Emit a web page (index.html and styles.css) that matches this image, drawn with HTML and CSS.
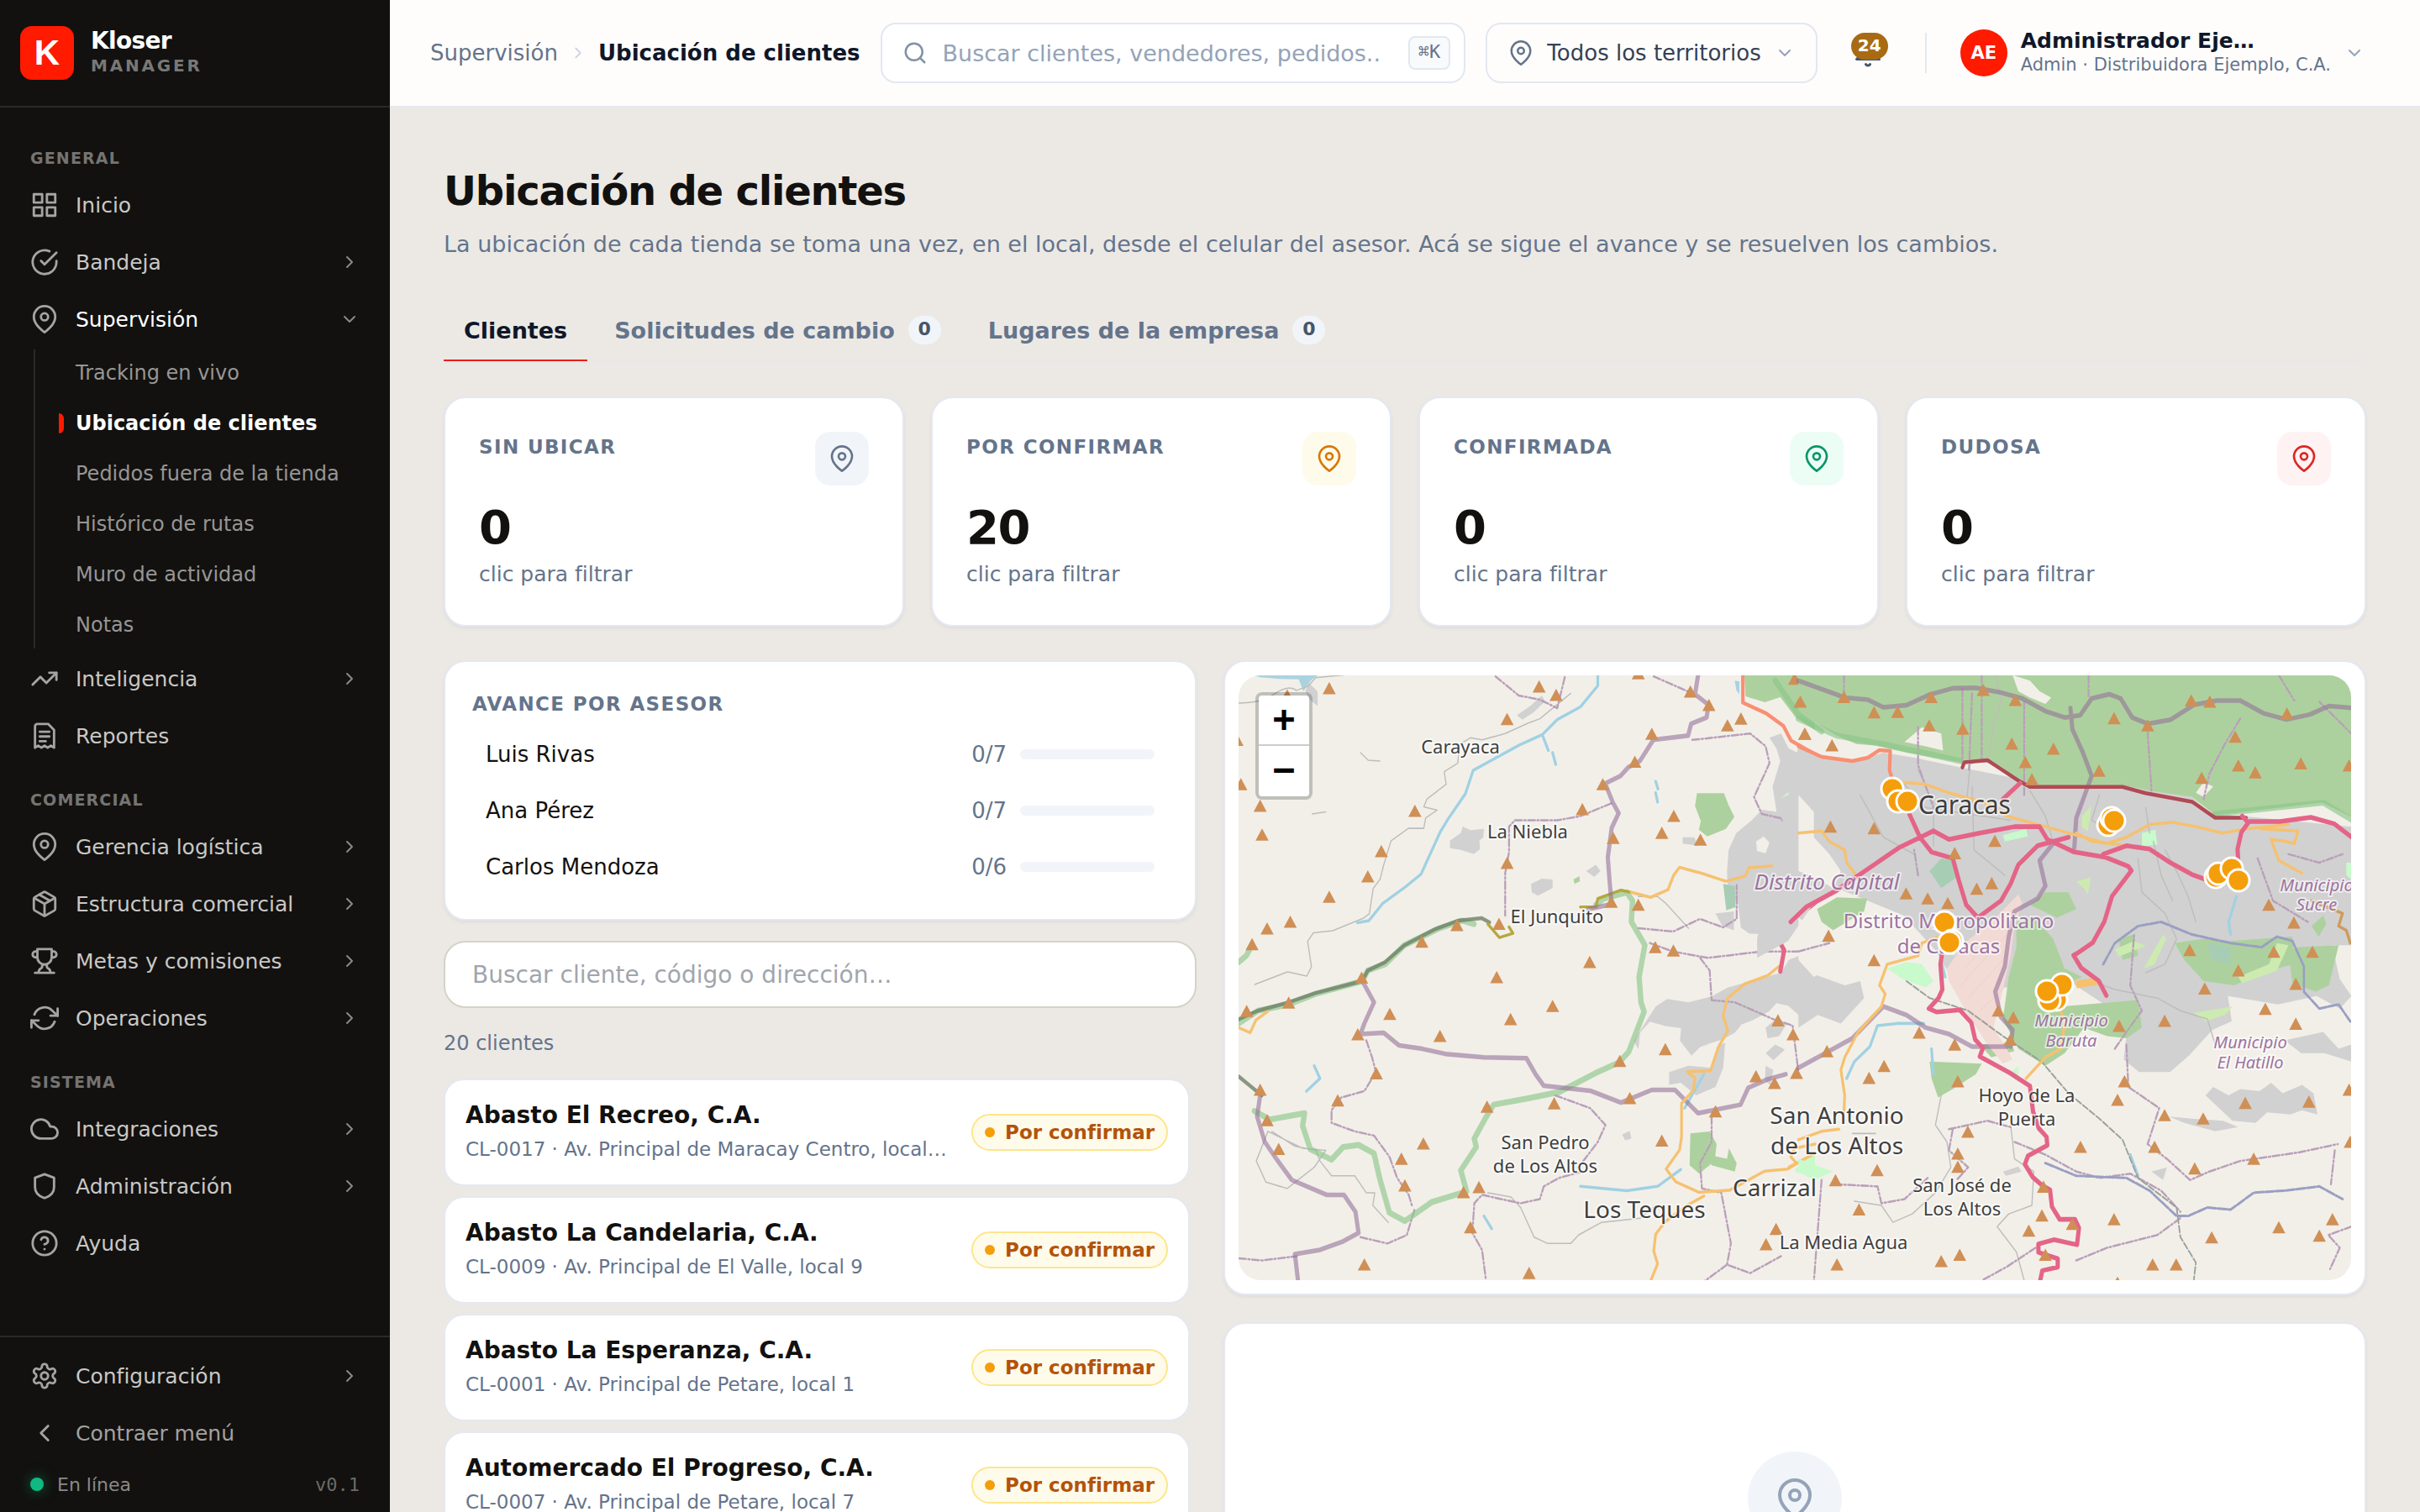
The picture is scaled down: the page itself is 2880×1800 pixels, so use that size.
FILE: index.html
```html
<!DOCTYPE html>
<html lang="es">
<head>
<meta charset="utf-8">
<meta name="viewport" content="width=device-width, initial-scale=1">
<title>Ubicación de clientes · Kloser Manager</title>
<link rel="stylesheet" href="styles.css">
</head>
<body>
<svg class="sprite" aria-hidden="true">
  <symbol id="i-pin" viewBox="0 0 24 24"><path d="M21 10c0 7-9 13-9 13s-9-6-9-13a9 9 0 0 1 18 0z"/><circle cx="12" cy="10" r="3"/></symbol>
  <symbol id="i-right" viewBox="0 0 24 24"><path d="m9 18 6-6-6-6"/></symbol>
  <symbol id="i-down" viewBox="0 0 24 24"><path d="m6 9 6 6 6-6"/></symbol>
</svg>
<div class="app">
  <aside class="sidebar">
    <div class="brand">
      <span class="brand-mark">K</span>
      <div><div class="brand-name">Kloser</div><div class="brand-sub">MANAGER</div></div>
    </div>
    <nav class="nav" aria-label="Principal">
      <h2 class="nav-label">GENERAL</h2>
      <a class="nav-item" href="#inicio"><svg class="nav-icon" viewBox="0 0 24 24"><path d="M3 3h7v7H3zM14 3h7v7h-7zM14 14h7v7h-7zM3 14h7v7H3z"/></svg><span>Inicio</span></a>
      <button class="nav-item" type="button"><svg class="nav-icon" viewBox="0 0 24 24"><path d="M22 11.1V12a10 10 0 1 1-5.9-9.1"/><path d="M22 4 12 14l-3-3"/></svg><span>Bandeja</span><svg class="chev"><use href="#i-right"/></svg></button>
      <button class="nav-item open" type="button" aria-expanded="true"><svg class="nav-icon"><use href="#i-pin"/></svg><span>Supervisión</span><svg class="chev"><use href="#i-down"/></svg></button>
      <div class="subnav">
        <a class="sub-item" href="#tracking">Tracking en vivo</a>
        <a class="sub-item current" href="#ubicacion" aria-current="page">Ubicación de clientes</a>
        <a class="sub-item" href="#pedidos">Pedidos fuera de la tienda</a>
        <a class="sub-item" href="#rutas">Histórico de rutas</a>
        <a class="sub-item" href="#muro">Muro de actividad</a>
        <a class="sub-item" href="#notas">Notas</a>
      </div>
      <button class="nav-item" type="button"><svg class="nav-icon" viewBox="0 0 24 24"><path d="m22 7-8.5 8.5-5-5L2 17"/><path d="M16 7h6v6"/></svg><span>Inteligencia</span><svg class="chev"><use href="#i-right"/></svg></button>
      <a class="nav-item" href="#reportes"><svg class="nav-icon" viewBox="0 0 24 24"><path d="M4 22V4a2 2 0 0 1 2-2h9l5 5v15l-2.700-1.800L14.600 22 12 20.200 9.400 22l-2.700-1.800z"/><path d="M8 8.500h8M8 12.500h8M8 16.500h5"/></svg><span>Reportes</span></a>
      <h2 class="nav-label">COMERCIAL</h2>
      <button class="nav-item" type="button"><svg class="nav-icon"><use href="#i-pin"/></svg><span>Gerencia logística</span><svg class="chev"><use href="#i-right"/></svg></button>
      <button class="nav-item" type="button"><svg class="nav-icon" viewBox="0 0 24 24"><path d="m7.500 4.270 9 5.150"/><path d="M21 8a2 2 0 0 0-1-1.730l-7-4a2 2 0 0 0-2 0l-7 4A2 2 0 0 0 3 8v8a2 2 0 0 0 1 1.730l7 4a2 2 0 0 0 2 0l7-4A2 2 0 0 0 21 16Z"/><path d="m3.300 7 8.700 5 8.700-5M12 22V12"/></svg><span>Estructura comercial</span><svg class="chev"><use href="#i-right"/></svg></button>
      <button class="nav-item" type="button"><svg class="nav-icon" viewBox="0 0 24 24"><path d="M6 9H4.500a2.500 2.500 0 0 1 0-5H6M18 9h1.500a2.500 2.500 0 0 0 0-5H18M4 22h16M10 14.660V17c0 .550-.470.980-.970 1.210C7.850 18.750 7 20.240 7 22M14 14.660V17c0 .550.470.980.970 1.210C16.150 18.750 17 20.240 17 22M18 2H6v7a6 6 0 0 0 12 0V2Z"/></svg><span>Metas y comisiones</span><svg class="chev"><use href="#i-right"/></svg></button>
      <button class="nav-item" type="button"><svg class="nav-icon" viewBox="0 0 24 24"><path d="M23 4v6h-6M1 20v-6h6"/><path d="M3.510 9a9 9 0 0 1 14.850-3.360L23 10M1 14l4.640 4.360A9 9 0 0 0 20.490 15"/></svg><span>Operaciones</span><svg class="chev"><use href="#i-right"/></svg></button>
      <h2 class="nav-label">SISTEMA</h2>
      <button class="nav-item" type="button"><svg class="nav-icon" viewBox="0 0 24 24"><path d="M18 10h-1.260A8 8 0 1 0 9 20h9a5 5 0 0 0 0-10z"/></svg><span>Integraciones</span><svg class="chev"><use href="#i-right"/></svg></button>
      <button class="nav-item" type="button"><svg class="nav-icon" viewBox="0 0 24 24"><path d="M20 13c0 5-3.500 7.500-7.660 8.950a1 1 0 0 1-.670-.010C7.500 20.500 4 18 4 13V5l8-3 8 3z"/></svg><span>Administración</span><svg class="chev"><use href="#i-right"/></svg></button>
      <a class="nav-item" href="#ayuda"><svg class="nav-icon" viewBox="0 0 24 24"><circle cx="12" cy="12" r="10"/><path d="M9.090 9a3 3 0 0 1 5.830 1c0 2-3 3-3 3M12 17h.010"/></svg><span>Ayuda</span></a>
    </nav>
    <div class="side-foot">
      <button class="nav-item" type="button"><svg class="nav-icon" viewBox="0 0 24 24"><path d="M12.220 2h-.440a2 2 0 0 0-2 2v.180a2 2 0 0 1-1 1.730l-.430.250a2 2 0 0 1-2 0l-.150-.080a2 2 0 0 0-2.730.730l-.220.380a2 2 0 0 0 .730 2.730l.150.100a2 2 0 0 1 1 1.720v.510a2 2 0 0 1-1 1.740l-.150.090a2 2 0 0 0-.730 2.730l.220.380a2 2 0 0 0 2.730.730l.150-.080a2 2 0 0 1 2 0l.430.250a2 2 0 0 1 1 1.730V20a2 2 0 0 0 2 2h.440a2 2 0 0 0 2-2v-.180a2 2 0 0 1 1-1.730l.430-.250a2 2 0 0 1 2 0l.150.080a2 2 0 0 0 2.730-.730l.220-.390a2 2 0 0 0-.730-2.730l-.150-.080a2 2 0 0 1-1-1.740v-.500a2 2 0 0 1 1-1.740l.150-.090a2 2 0 0 0 .730-2.730l-.220-.380a2 2 0 0 0-2.730-.730l-.150.080a2 2 0 0 1-2 0l-.430-.250a2 2 0 0 1-1-1.730V4a2 2 0 0 0-2-2z"/><circle cx="12" cy="12" r="3"/></svg><span>Configuración</span><svg class="chev"><use href="#i-right"/></svg></button>
      <button class="nav-item muted" type="button"><svg class="nav-icon" viewBox="0 0 24 24"><path d="m15 18-6-6 6-6"/></svg><span>Contraer menú</span></button>
      <div class="status"><span class="status-dot"></span><span>En línea</span><span class="version">v0.1</span></div>
    </div>
  </aside>

  <div class="page">
    <header class="topbar">
      <nav class="crumbs" aria-label="Ruta"><a href="#supervision">Supervisión</a><svg class="crumb-sep"><use href="#i-right"/></svg><span class="crumb-now">Ubicación de clientes</span></nav>
      <div class="search">
        <svg class="search-icon" viewBox="0 0 24 24"><circle cx="11" cy="11" r="8"/><path d="m21 21-4.350-4.350"/></svg>
        <input type="search" aria-label="Buscar" placeholder="Buscar clientes, vendedores, pedidos..">
        <kbd>⌘K</kbd>
      </div>
      <button class="territory" type="button"><svg class="pin30"><use href="#i-pin"/></svg><span>Todos los territorios</span><svg class="chev"><use href="#i-down"/></svg></button>
      <button class="bell" type="button" aria-label="Notificaciones"><svg viewBox="0 0 24 24"><path d="M18 8A6 6 0 0 0 6 8c0 7-3 9-3 9h18s-3-2-3-9"/><path d="M13.730 21a2 2 0 0 1-3.460 0"/></svg><span class="bell-count">24</span></button>
      <span class="divider"></span>
      <button class="user" type="button"><span class="avatar">AE</span><span class="user-text"><strong>Administrador Eje…</strong><small>Admin · Distribuidora Ejemplo, C.A.</small></span><svg class="chev"><use href="#i-down"/></svg></button>
    </header>

    <main class="content">
      <h1>Ubicación de clientes</h1>
      <p class="lead">La ubicación de cada tienda se toma una vez, en el local, desde el celular del asesor. Acá se sigue el avance y se resuelven los cambios.</p>
      <div class="tabs" role="tablist">
        <button class="tab active" type="button" role="tab" aria-selected="true">Clientes</button>
        <button class="tab" type="button" role="tab">Solicitudes de cambio <span class="count">0</span></button>
        <button class="tab" type="button" role="tab">Lugares de la empresa <span class="count">0</span></button>
      </div>

      <section class="kpis" aria-label="Resumen">
        <button class="card kpi" type="button"><span class="kpi-head"><span class="eyebrow">SIN UBICAR</span><span class="kpi-icon slate"><svg><use href="#i-pin"/></svg></span></span><span class="kpi-num">0</span><span class="kpi-hint">clic para filtrar</span></button>
        <button class="card kpi" type="button"><span class="kpi-head"><span class="eyebrow">POR CONFIRMAR</span><span class="kpi-icon amber"><svg><use href="#i-pin"/></svg></span></span><span class="kpi-num">20</span><span class="kpi-hint">clic para filtrar</span></button>
        <button class="card kpi" type="button"><span class="kpi-head"><span class="eyebrow">CONFIRMADA</span><span class="kpi-icon green"><svg><use href="#i-pin"/></svg></span></span><span class="kpi-num">0</span><span class="kpi-hint">clic para filtrar</span></button>
        <button class="card kpi" type="button"><span class="kpi-head"><span class="eyebrow">DUDOSA</span><span class="kpi-icon red"><svg><use href="#i-pin"/></svg></span></span><span class="kpi-num">0</span><span class="kpi-hint">clic para filtrar</span></button>
      </section>

      <div class="split">
        <div class="left">
          <section class="card advance">
            <h2 class="eyebrow">AVANCE POR ASESOR</h2>
            <ul>
              <li><span>Luis Rivas</span><span class="ratio">0/7</span><span class="bar"></span></li>
              <li><span>Ana Pérez</span><span class="ratio">0/7</span><span class="bar"></span></li>
              <li><span>Carlos Mendoza</span><span class="ratio">0/6</span><span class="bar"></span></li>
            </ul>
          </section>
          <input class="client-search" type="search" aria-label="Buscar cliente" placeholder="Buscar cliente, código o dirección…">
          <p class="total">20 clientes</p>
          <div class="clients">
            <button class="client" type="button"><span class="client-text"><strong>Abasto El Recreo, C.A.</strong><small>CL-0017 · Av. Principal de Maracay Centro, local…</small></span><span class="badge">Por confirmar</span></button>
            <button class="client" type="button"><span class="client-text"><strong>Abasto La Candelaria, C.A.</strong><small>CL-0009 · Av. Principal de El Valle, local 9</small></span><span class="badge">Por confirmar</span></button>
            <button class="client" type="button"><span class="client-text"><strong>Abasto La Esperanza, C.A.</strong><small>CL-0001 · Av. Principal de Petare, local 1</small></span><span class="badge">Por confirmar</span></button>
            <button class="client" type="button"><span class="client-text"><strong>Automercado El Progreso, C.A.</strong><small>CL-0007 · Av. Principal de Petare, local 7</small></span><span class="badge">Por confirmar</span></button>
          </div>
        </div>

        <div class="right">
          <section class="card map-card">
            <div class="map">
              <svg class="map-svg" viewBox="0 0 1324 720" preserveAspectRatio="xMidYMid slice" role="img" aria-label="Mapa de clientes en Caracas">
                <defs>
                  <marker id="peak" markerUnits="userSpaceOnUse" markerWidth="36" markerHeight="30" refX="18" refY="15" orient="0"><path d="M18 0 35 29H1z" fill="#d08f55"/></marker>
                </defs>
                <g transform="matrix(0.4592 0 0 0.5038 -34 -34)">
                  <!-- western half -->
                  <g class="water-fill"><path d="M110 67h170l-18 12-20 26-12-28-50-1-50-4zM1360 80l12 2v30l-8-10z"/></g>
                  <g class="town">
                    <path d="M622 458l28-18 5-15 20 8 35-3-2 20-10 8 2 20-16 12-34-10-28-4zM832 560l28-12 28 2v20l-38 18-16-8zM795 162l35-22 30-25 8 14-28 25-30 18zM975 530l25-15 12 15-16 14zM255 85l24 20v35l-20-15-12-20z"/>
                    <path d="M1450 215l30-10 20 35 45 20 23 5v165l-40 5-20 20-25-10-13-45-12-70 20-60-10-30z"/>
                    <path d="M1340 530l4-50 20-40 40-30 26-25 40 5 20 20 20 30 58-10v170l-60 20-30 60-80-2-22-14-8-60-26-30z"/>
                    <path d="M1155 850l30-18 55 8 60-14 40-20 60-16 80-20 20-30 68-25v155l-40 2-30-24-30-6-20 20-40 20-30 10-18 20-32 16-28 8-30 10-22 20-30-35 3-30-41-5-40-10-25 25-5 40-12-20z"/>
                    <path d="M1190 1005l50-15 60 5 15-50 20-10-5 60-20 45-50 20-40-30-30 5zM1310 630l48-5v45l-30-10zM1440 900l20-15 35 5-20 30-30 5zM1440 960l25-20 25 12-30 25zM1440 990l20 10-8 35-14-10zM1225 450l30 0 10 20-40-5zM1068 1152l20-8 4 18-16 4z"/>
                  </g>
                  <path class="land" d="M1415 460l20-12 15 15-10 25-22-5z"/>
                  <g class="wood">
                    <path d="M1385 67h183v130l-50-30-40-48-40 12-50-14zM1262 346h70l12 28 15 28-22 28-48 18-22-16 5-20-15-36zM1245 1150l50-5 18 30-5 40-40 30-25-20zM1290 1200l50 10 5-25 20 35-5 20-60-15zM942 550l15-8 2 12-14 6z"/>
                    <path class="scrub" d="M1330 560l30 5 2 50-24 8z"/>
                  </g>
                  <path class="mint" d="M1480 360q35-40 58 0-30-22-58 0zM1515 1235l53-40v55l-48-8z"/>
                  <g class="lane">
                    <path d="M74 133q60 0 90-20 40-25 60-10l30-10 20-20 90-8M935 110l-80 60-30 10-60 25-60 15-30-5-28 15-5 45-35 20 5 30-50 35-8 18 35 8-30 18-5 25-40 0-45 30-20 60-8 30-18 22-10 60-15 10-80 30-50 5-15 20 10 60-12 22-50-10-85 30"/>
                    <path d="M160 1145l60 35 55 10 10 25 30 35 60 0 30 40 22 0-5 30 40 40M120 1215l25 50 55 15 70-50 30-40-60-5-90-40zM720 1290l60 10 25 25 35 70 35 15 60 0 20-20 60-30 100-10 40-30M1110 590l50 0 20 15 60 60M390 250l20 18 30 2 M265 395l35-5"/>
                  </g>
                  <g class="river">
                    <path d="M1005 67v25l-45 50-60 30-38 35-60 25-60 30-60 30-20 55-45 60-20 30-30 60-20 40-40 30-60 40-35 40-30 5M862 210l15 35M888 250l8 28M1155 318l6 18M1155 345l5 22M250 1050l35-30-15-30M960 1275l120 10 80-10 60-40M1280 1010l-50 80M710 1345l20 30"/>
                  </g>
                  <g class="dash">
                    <path d="M740 70l60 45 55 10 45 20 20-75M1040 370l-80 30-60 10-110 0-15 15 0 60-10 50 0 100M405 930l15 40 10 35-30 45-60 15-25 30 0 30 60 20 50 10 40 50 20 50 30 40 10 30M1110 665l90 8 70-30 60 20 35-20 0-80M1140 700l60 20 90 15 140-15 138 0M1270 735l25 30 5 70 60 5 100 40 50 15 15 110M895 1060l90 30 40 40-20 40-50 60M965 1240l-60 15-40 20-10 30-50 10-100-20-20 20-5 70 25 40 10 70M1300 1110l0 60-30 50 5 60 50 10 25 120-10 50 60 20 80-40M1340 1460l-60 40M75 1445l60 5 90-10M1250 220l150-15 40 30 10 40-40 80 20 40 50 10 30 50 88-5M390 1395l70 15 50-20 20-60M1150 70l100 40"/>
                  </g>
                  <g class="greenline">
                    <path d="M74 745l20-15 15-25M74 890l50-30 80-15 70-25 120-30 15-25 45-15 50-45 90-40 60-18 30 8M1000 610l20-15 60-15 15 20-3 50 35 55-15 75 5 60 8 22-40 95-25 25-60 25-95 45-80 15-90 15-20 30-30 50 5 20-40 55 15 50-90 25-70 45-40-20-25-80-15-60-40-20-40 5-30 30-55-25-20-55 5-30-90 15-40-20"/>
                  </g>
                  <path class="darkline" d="M74 880l50-20 80-20 70-22 120-28 15-25 45-20 50-40 80-38 60-20 60-6 20 10M74 1015l60 45"/>
                  <path class="olive" d="M720 655l30 32 35-10-10-15M960 615l40 0 5-20 60-20 25 5"/>
                  <g class="bound">
                    <path d="M1265 67l-8 45 35 25-5 30-40 15-8 28-90 10-35 50-30 15-20 20-40 18 20 45 15 25-18 35-10 70 5 60 5 50-60 12M395 790l30 50-25 50-10 25 60-3 40 30 60 8 60 12 100 8 110 2 25 40 20 25 120 12 80 28 80-30 60 0 60 55 110-20 20-40 50-20 47-12M130 1060l-8 50 20 60 30 40 40 50 90 35 45 0 30 40 8 50-40 20-60 20-65 10 8 62"/>
                  </g>
                  <g class="road2">
                    <path d="M1092 580l50 12 45-18 15-35 15-18 60 15 60 18 50-12 10-20 70-5 50-40 15-40 36-5M74 900l30 12 15-30 30-20M1475 755l-30 22-60 20-45 35-10 40 12 35-25 40-20 55-60 2 20 15-5 30-30 30 0 80-5 30-35 45 25 30 60 25 80-5 90-45 60-5 40-22 30-15M1280 1298l-40 20-60 40-25 30-5 40 10 30-20 45M1500 1230l20-10-15-15 10-20 53-10"/>
                  </g>
                  <path class="trunk" d="M1381 67v65l60 25 45 30 20 35 62 32"/>
                  <path class="motor" d="M1568 605l-50 35-52 32 10 25 12 20-10 50"/>
                  <path class="peaks" d="M200 115L309 98 853 94 897 114 770 171 1245 106 1293 138 1376 170 1341 186 1145 206 1101 272 1018 325 965 384 1045 452 531 388 444 483 409 543 309 591 208 650 148 666 109 703 130 376 135 444 80 325 770 511 749 655 640 658 549 697 393 782 204 841 95 861 743 781 984 745 888 849 779 880 466 868 596 920 383 916 431 1008 331 1072 130 1047 148 1119 178 1187 553 1174 496 1210 505 1273 657 1289 697 1277 718 1087 892 1079 1062 979 1180 951 1088 1067 1310 1098 1171 1167 675 1372 400 1460 827 1480 1441 1412 1467 1376 1463 1031 1520 1007 1415 1015 1472 883 1511 916 1154 710 1201 718 1110 610 1040 603 1202 400 1171 440 1271 456 1515 76 1529 130 1541 206 1110 63 70 220"/>

                  <!-- eastern half -->
                  <g transform="translate(1525 0)">
                    <g class="town">
                      <path d="M0 235l60 27 90 8 70-20 80 12 120 23 140 25 40 15h260l160 30 50 40 80 5 283 25v280l-50 0 20 80 30 40-30 30-60-30-100 20-130-20 10 60-50 20-60 60-50 40-80 0-40-30 10-80-60-50-100-60-80 20-200 0-60-90-80-80-160-60-80 40-60 80-80 40V690z"/>
                      <path d="M1055 1060l20-20 40 20 30-15 50 5 30-20 30 25 50-20 30 20 10 50-40-10-30 10-60-5-30 25-60-5zM1260 930l100-20 40 40 33-10v40l-70-20-60 0zM960 1110l60 5 80 5 40 15-60 10-80-20zM530 1240l40-12 8 12-40 10zM915 1240l40-10-10 30zM0 760l60 20 60 20 40-10 10 40-60 60-60-20-50 30z"/>
                    </g>
                    <g class="land">
                      <path d="M0 350l40 40 0 60 40 40 30 40-20 40-60-30-30-10zM0 640l50 30 80 30 50-30 40 50-40 40-80-10-60 30-40-40zM130 900l80-30 110 30 60 60 90 20 110 90V1100H130z"/>
                    </g>
                    <g class="wood">
                      <path d="M0 67h1433v335l-75-34-278 30-60-43-110-15-50-10H600l-40-25-60-32-70 2-150-25-80-17-50-3-50-20-100-55z"/>
                      <path d="M48 620l52-28 78 3-8 30-80 45-30-20zM565 650l45-10 50 50 30 70 45 20-45 20-10 50 200-15 10 65-40 25-50-5-60-20-50 60-50 30-70-40-40-70 15-100 20-70zM340 980l135 5-15 25-60 35-38 20-17-45zM830 690l40-10 10 50-40 10zM975 700l75-10 70 5 160-10 5 65-45 10-60 20-50 20-80-10-50-50zM1290 710l110-5-25 95-35 15-60-20-10-75zM600 610l40-30 60 0 20 40-50 20zM470 940l80-5 10 20-60 15zM1330 660l30-25 8 20-20 30z"/>
                      <path class="scrub" d="M340 530l30-30 35 5 5 40-40 25zM1060 700l60 10 0 40-50-10z"/>
                    </g>
                    <g class="land">
                      <path d="M555 67l45 13 25 25 30 15-15 15-40-15-30-15zM275 225l45-35 50 15 5 40-45-10zM1030 345l20-25 25 10-25 25z"/>
                    </g>
                    <g class="mint"><path d="M230 760l50-15 40 5 30 40-20 15-60-20zM530 445l60-15 5 18-60 12zM890 440l35-8 5 35-40 5zM545 1010l25-20 0 40zM1420 510l13 0v40l-13-10zM0 1210l60 20 30 10-50 20-40-20z"/></g>
                    <g class="lime"><path d="M895 760l50-80 8 10-30 60zM1025 865l100-15-20 20-50 15zM735 400l25-25-10 60-15-8zM720 555l38-10-8 40-10-15zM1140 780l80-30 20-50 30 5-30 60-90 30zM820 715l50-20 30 12-70 25z"/></g>
                    <path class="airport" d="M570 585l10 20-20 55-10 70-30 120-15 50 35 50 15 25-25 10-40-45-50-70-50-80-5-30 45-60 70-50z"/>
                    <path class="hatch" d="M420 800l120-120M440 830l100-100M470 860l70-60M430 760l60-60"/>
                    <g class="lane">
                      <path d="M510 67l15 60-20 60-10 70-50 20-10 100M310 290l40 80 0 100M600 340l40 60 20 60M780 350l-20 60 60 30M920 460l20 80 30 60M950 480l30 50 30 60 20 60M760 790l60 20 110 20 60 30 70 20 20 60M450 330l5 150 80 60M880 500l10 80 60 50 30 60-30 60-50 20M270 320l60 60 220 30M160 350l60 100 80 40M140 1150l60 0M370 1060l-15 70 30 40 10 60-40 60-60 50-50 20-30-40-70-10M550 1130l10 80 50 30-5 80-60 20-30 30 50 60 30 100M900 380l10 60"/>
                    </g>
                    <g class="river"><path d="M1135 590l-20 60 5 30M325 890l-70 0-50 5-20 50-40 35-20 40M345 950l5 60M370 740l10 40M860 1200l20 50"/></g>
                    <g class="dash">
                      <path d="M118 67v50M310 190l0 90 40 100M425 100v180M450 110l-8 180M475 67v200M585 130v220M752 67v50M905 200l10 140M1145 170l-40 60-40 70-15 60M1245 67l40 60M1350 130l83 75M820 950l30-40 40-50-30-60 10-120M850 940l5 100 80 50-30 85 50 35 60 50 50-20 80-25 150-20 103-20M1390 1190l-10 80M560 1170l80 30 80 40 60 15 80-10 80 40 50 50M720 1450l80-30 130-30 60-40M390 1140l100-20 60 15M400 1140l-10 50 50 40-30 30M95 1270l110 5 10 40 60-10 60-50M60 1260l-20 240M1433 1370l-60 20 30 30-25 50M480 1495l60-30 100-60M1190 500l40 100 90 50M0 720l80-20M310 540l-10-60M1270 490l80 20 60-20"/>
                    </g>
                    <g class="blueline"><path d="M790 750l30-50 60-40 60-10 80 30 100 20 80 10 40-25 40 10 30 60 0 60 40 40 50-10 30 40 53 25M640 1220l80 30 130 5 60 30 70 60 30 0 50-20 60 5 60-40 80-5 90-10 60 30"/></g>
                    <path class="rail" d="M280 790l60 40 100 30 90 60 100 60 70 75 80 60 60 50 40 90 100 70 10 70 40 60-5 40"/>
                    <path class="greenline" d="M0 170l100 40 120 20 200 40M1080 395l280-27 73 40"/>
                    <path class="greenline" d="M-60 80l60 80 60 40"/>
                    <g class="bound">
                      <path d="M0 80l60 20 60 20 60 5 40 18 60-5 60-25 60-15 60-1 60 10 60 15 60 30 50 15 40-5 30-40 45-10 30 10 30 45 40 15 60-10 60-35 60-10 60 0 60 30 60 15 60-12 50-20 133 10M705 145l5 50 25 50 25 60-40 100-5 70M660 465l-35 40 15 60-20 30-60 30-15 60-10 70-25 60 15 60 30 30-5 40M0 995l60-30 80-40 80-75 60 20 50 30 60 15 60 30 90 0"/>
                    </g>
                    <g class="road2">
                      <path d="M0 440l60-5 20 25 40 20 5 30 25 30M270 320l60 5 60 20 100 25 50 30 120 30 80 20 60 15 50-15 60-30 60-5 60 10 70 15 60-10 110-10M1200 430l95 5-10 30-20-5-40-5 20 50 60 30M380 680l-60 20-10 30-80 20-20 50 15 20-10 30-60 60-35 60-10 30 10 60-2 40M0 1165l60-20 45-5M720 440l40 20 90 10M670 830l20 60-10 60-40 20-50 50"/>
                      <path class="wide" d="M720 798l55-8"/>
                      <path class="ochre" d="M1330 600l80 30-10 30 20 10 10 30"/>
                    </g>
                    <path class="trunk" d="M0 235l60 25 80 10 40-8 30-18 28 2-2 45 10 30"/>
                    <path class="redline" d="M425 285l5-12 60-5 30 18 50 30 30 15 240 0 60 15 120 20 60 38 80 0"/>
                    <g class="motor">
                      <path d="M-20 650l40-35 80-40 80-50 80-50 90-40 40 20 80-15 90-15 65 0 20 30 70 30 80 12 60 22 8 10-50 60-20 60-30 50-40 25-10 5 20 30 45 30 20 35M245 320l30 50 40 80 30 35 55 15 15 50 20 60 30 30 60-40 25-40 20-45 50-45 60-15 20-5M790 490l60-20 60 8 50 30 60 30 60 20 60-50-2-30 10-40 20-25 80 0 80-10 60 15 65 45M1165 415l-15-15M530 360l45-38M378 690l-10 60 5 60-10 20-25 25 20 8 60-5 30 30 10 40 20 20-8 20 80 40 50 30 8 60 15 40 20 20 2 20-50 25-8 20 20 30 25 20 20 10 5 40 20 30 40 0 10 20-5 40-60-12-40 10 0 20 50 15 0 20-40 8-8 35"/>
                    </g>
                    <path class="peaks" d="M118 119L5 130 196 155 257 154 344 119 479 102 562 126 339 186 426 194 553 229 661 241 588 273 605 313 779 293 818 169 905 186 1018 127 1066 130 1266 158 1132 213 1140 281 1184 297 1302 276 1427 281 1045 310 87 233 17 206 83 425 196 429 509 459 405 488 501 559 462 572 387 606 335 595 279 583 78 683 196 741 518 860 557 876 549 929 405 940 313 912 74 956 222 991 183 1019 413 1027 439 1146 413 1198 413 1229 204 1237 96 1261 157 1330 100 1460 370 1452 418 1437 640 1437 597 1380 631 1344 635 1276 710 1364 818 1353 731 1182 827 1071 845 1027 831 896 949 884 1053 808 1140 765 1014 717 1219 610 1284 652 1232 721 1332 721 1289 797 1210 856 1289 891 1158 1078 1323 1075 1427 1047 949 1107 1049 1115 923 1182 1027 1233 1180 1210 1430 1170 1384 1353 1245 1372 1350 1392 1071 1396 918 1460 979 1460 827 1503"/>
                  </g>
                </g>
                <g class="place">
                  <text x="264" y="93">Carayaca</text><text x="344" y="194">La Niebla</text><text x="379" y="295">El Junquito</text>
                  <text x="365" y="564">San Pedro</text><text x="365" y="592">de Los Altos</text>
                  <text x="861" y="615">San José de</text><text x="861" y="643">Los Altos</text><text x="720" y="683">La Media Agua</text>
                  <text x="938" y="508">Hoyo de La</text><text x="938" y="536">Puerta</text>
                </g>
                <g class="place town-name">
                  <text x="483" y="646">Los Teques</text><text x="638" y="620">Carrizal</text><text x="712" y="534">San Antonio</text><text x="712" y="570">de Los Altos</text><text class="city" x="864" y="165">Caracas</text>
                </g>
                <g class="place admin">
                  <text class="slant" x="700" y="255">Distrito Capital</text><text x="845" y="301">Distrito Metropolitano</text><text x="845" y="331">de Caracas</text>
                </g>
                <g class="place admin small">
                  <text x="1283" y="257">Municipio</text><text x="1283" y="280">Sucre</text>
                  <text x="991" y="418">Municipio</text><text x="991" y="442">Baruta</text>
                  <text x="1204" y="444">Municipio</text><text x="1204" y="468">El Hatillo</text>
                </g>
                <g class="stops">
                  <circle cx="778" cy="135" r="13"/><circle cx="785" cy="150" r="13"/><circle cx="796" cy="150" r="13"/>
                  <circle cx="1035" cy="178" r="13"/><circle cx="1039" cy="170" r="13"/><circle cx="1042" cy="173" r="13"/>
                  <circle cx="1163" cy="240" r="13"/><circle cx="1166" cy="236" r="13"/><circle cx="1182" cy="230" r="13"/><circle cx="1190" cy="244" r="13"/>
                  <circle cx="840" cy="294" r="13"/><circle cx="849" cy="316" r="13"/><circle cx="846" cy="318" r="13"/>
                  <circle cx="973" cy="386" r="13"/><circle cx="965" cy="387" r="13"/><circle cx="980" cy="368" r="13"/><circle cx="962" cy="376" r="13"/>
                </g>
              </svg>
              <div class="zoom"><button type="button" aria-label="Acercar">+</button><button type="button" aria-label="Alejar">−</button></div>
            </div>
          </section>
          <section class="card empty"><span class="empty-icon"><svg><use href="#i-pin"/></svg></span></section>
        </div>
      </div>
    </main>
  </div>
</div>
</body>
</html>
```
FILE: styles.css
```css
* { box-sizing: border-box; }
body {
  margin: 0;
  font-family: "DejaVu Sans", sans-serif;
  background: #ece9e5;
  color: #12110f;
}
h1, h2, p, ul { margin: 0; padding: 0; }
ul { list-style: none; }
a { color: inherit; text-decoration: none; }
button, input { font: inherit; color: inherit; }
button { border: 0; background: none; padding: 0; text-align: left; cursor: pointer; }
svg { fill: none; stroke: currentColor; stroke-width: 2; stroke-linecap: round; stroke-linejoin: round; flex: none; }
.sprite { position: absolute; width: 0; height: 0; }
.chev { width: 24px; height: 24px; }

.app { display: flex; height: 100vh; overflow: hidden; }

/* Sidebar */
.sidebar { width: 464px; flex: none; display: flex; flex-direction: column; background: #12110f; color: #c9c8c6; }
.brand { display: flex; align-items: center; gap: 20px; height: 128px; flex: none; padding: 0 24px; border-bottom: 2px solid #2a2927; }
.brand-mark { width: 64px; height: 64px; border-radius: 14px; background: #ff1a00; color: #fff; display: grid; place-items: center; font: bold 42px/1 "Liberation Sans", sans-serif; }
.brand-name { font-size: 28px; line-height: 30px; font-weight: bold; letter-spacing: -0.025em; color: #fff; }
.brand-sub { font-size: 20px; line-height: 28px; font-weight: bold; letter-spacing: 0.14em; color: #797876; }
.nav { flex: 1; min-height: 0; overflow: hidden; padding: 16px 16px 0; }
.nav-label { font-size: 19px; line-height: 32px; font-weight: bold; letter-spacing: 0.06em; color: #757472; padding: 28px 20px 8px; }
.nav-item { display: flex; align-items: center; gap: 20px; width: 100%; height: 64px; padding: 0 20px; margin-bottom: 4px; font-size: 25px; border-radius: 16px; }
.nav-item:has(+ .nav-label), .nav-item:last-child { margin-bottom: 0; }
.nav-icon { width: 34px; height: 34px; color: #a5a4a2; }
.nav-item .chev { margin-left: auto; color: #8a8987; }
.nav-item.open { color: #fff; }
.nav-item.muted { color: #a3a2a0; }
.subnav { display: flex; flex-direction: column; gap: 4px; margin: 0 0 4px 24px; padding-left: 28px; border-left: 2px solid #2a2927; }
.sub-item { position: relative; height: 56px; line-height: 56px; padding-left: 20px; font-size: 24px; color: #979694; }
.sub-item.current { color: #fff; font-weight: bold; }
.sub-item.current::before { content: ""; position: absolute; left: 0; top: 16px; width: 6px; height: 24px; border-radius: 0 6px 6px 0; background: #ff1a00; }
.side-foot { border-top: 2px solid #2a2927; padding: 14px 16px 8px; }
.side-foot .nav-item { margin-bottom: 4px; }
.status { display: flex; align-items: center; gap: 16px; height: 50px; padding: 0 20px; font-size: 22px; color: #8a8987; }
.status-dot { width: 16px; height: 16px; border-radius: 50%; background: #10b981; box-shadow: 0 0 16px rgba(16, 185, 129, 0.5); }
.version { margin-left: auto; font-family: "DejaVu Sans Mono", monospace; color: #6b6a68; }

/* Top bar */
.page { flex: 1; min-width: 0; display: flex; flex-direction: column; }
.topbar { display: flex; align-items: center; gap: 24px; height: 128px; flex: none; padding: 0 50px 0 48px; background: #fefdfc; border-bottom: 2px solid #e6e8ee; }
.crumbs { display: flex; align-items: center; gap: 13px; font-size: 26px; line-height: 32px; color: #64748b; white-space: nowrap; }
.crumb-sep { width: 22px; height: 22px; color: #cbd5e1; }
.crumb-now { font-weight: bold; color: #0f172a; }
.search { flex: 1; min-width: 0; display: flex; align-items: center; gap: 8px; height: 72px; padding: 0 16px 0 24px; border: 2px solid #e2e8f0; border-radius: 18px; background: #fff; }
.search-icon { width: 30px; height: 30px; margin-right: 10px; color: #8391a6; }
.search input { flex: 1; min-width: 0; border: 0; padding: 0; background: none; font-size: 27px; outline: 0; }
.search input::placeholder { color: #94a3b8; opacity: 1; }
kbd { height: 40px; padding: 0 10px; border: 2px solid #e2e8f0; border-radius: 8px; background: #f8fafc; color: #64748b; font: 22px/34px "DejaVu Sans Mono", monospace; }
.territory { display: flex; align-items: center; gap: 16px; height: 72px; padding: 0 25px; border: 2px solid #e2e8f0; border-radius: 18px; font-size: 26px; color: #334155; white-space: nowrap; }
.territory svg { color: #64748b; }
.pin30 { width: 30px; height: 30px; }
.territory .chev, .user .chev { color: #94a3b8; }
.bell { position: relative; width: 72px; height: 72px; display: grid; place-items: center; color: #475569; }
.bell svg { width: 36px; height: 36px; }
.bell-count { position: absolute; left: 16px; top: 12px; width: 44px; height: 32px; border-radius: 16px; background: #a86b14; color: #fff; font-size: 20px; line-height: 30px; font-weight: bold; text-align: center; }
.divider { width: 2px; height: 48px; margin-left: 8px; background: #e2e8f0; }
.user { display: flex; align-items: center; gap: 16px; padding: 0 16px; white-space: nowrap; }
.avatar { width: 56px; height: 56px; border-radius: 50%; background: #ff1a00; color: #fff; display: grid; place-items: center; font-size: 21px; font-weight: bold; }
.user-text { display: flex; flex-direction: column; }
.user-text strong { font-size: 25px; line-height: 28px; color: #0f172a; }
.user-text small { font-size: 21px; line-height: 28px; color: #64748b; }

/* Content */
.content { flex: 1; min-height: 0; overflow: hidden; padding: 69px 64px 0; }
h1 { font-size: 48px; line-height: 60px; letter-spacing: -0.025em; }
.lead { margin-top: 16px; font-size: 27px; line-height: 36px; color: #64748b; }
.tabs { display: flex; gap: 8px; margin-top: 47px; border-bottom: 2px solid #e6e8ea; }
.tab { display: flex; align-items: center; gap: 16px; height: 74px; padding: 2px 24px 0; border-bottom: 2px solid transparent; font-size: 27px; font-weight: bold; color: #64748b; }
.tab.active { color: #0f172a; border-color: #e8200c; }
.count { min-width: 39px; height: 34px; border-radius: 17px; background: #f1f5f9; color: #475569; font-size: 22px; line-height: 32px; text-align: center; }
.card { background: #fff; border: 2px solid #e4e8f0; border-radius: 26px; box-shadow: 0 2px 4px rgba(15, 23, 42, 0.06); }
.eyebrow { font-size: 23px; line-height: 36px; font-weight: bold; letter-spacing: 0.06em; color: #64748b; }
.kpis { display: grid; grid-template-columns: repeat(4, 1fr); gap: 32px; margin-top: 40px; }
.kpi { display: flex; flex-direction: column; padding: 40px; }
.kpi-head { display: flex; justify-content: space-between; align-items: flex-start; }
.kpi-icon { width: 64px; height: 64px; border-radius: 18px; display: grid; place-items: center; }
.kpi-icon svg { width: 32px; height: 32px; }
.slate { background: #f1f5f9; color: #64748b; }
.amber { background: #fffbeb; color: #d97706; }
.green { background: #ecfdf5; color: #059669; }
.red { background: #fef2f2; color: #dc2626; }
.kpi-num { margin-top: 20px; font-size: 56px; line-height: 60px; font-weight: bold; letter-spacing: -0.025em; }
.kpi-hint { margin-top: 6px; font-size: 25px; line-height: 40px; color: #64748b; }

.split { display: grid; grid-template-columns: 56fr 85fr; align-items: start; gap: 32px; margin-top: 40px; }
.left { display: flex; flex-direction: column; gap: 24px; min-width: 0; }
.advance { padding: 32px 32px 29px; }
.advance .eyebrow { line-height: 36px; margin-bottom: 8px; }
.advance li { display: flex; align-items: center; gap: 16px; height: 67px; padding: 0 16px; font-size: 26px; }
.ratio { margin-left: auto; color: #64748b; }
.bar { width: 160px; height: 12px; border-radius: 6px; background: #f1f5f9; }
.client-search { width: 100%; height: 80px; padding: 0 32px; border: 2px solid #d3d3c8; border-radius: 26px; background: #fff; font-size: 28px; outline: 0; }
.client-search::placeholder { color: #a1a5ad; opacity: 1; }
.total { font-size: 24px; line-height: 36px; color: #64748b; }
.clients { display: flex; flex-direction: column; gap: 12px; padding-right: 8px; }
.client { display: flex; align-items: center; justify-content: space-between; gap: 24px; height: 128px; padding: 0 24px; background: #fff; border: 2px solid #e4e8f0; border-radius: 24px; }
.client-text { min-width: 0; display: flex; flex-direction: column; gap: 4px; }
.client strong { font-size: 28px; line-height: 36px; }
.client small { font-size: 23px; line-height: 36px; color: #64748b; white-space: nowrap; overflow: hidden; text-overflow: ellipsis; }
.badge { flex: none; display: flex; align-items: center; gap: 12px; height: 44px; padding: 0 14px; border: 2px solid #fde68a; border-radius: 22px; background: #fffbeb; color: #b45309; font-size: 23px; font-weight: bold; }
.badge::before { content: ""; width: 12px; height: 12px; border-radius: 50%; background: #f59e0b; }

.right { display: flex; flex-direction: column; gap: 32px; min-width: 0; }
.map-card { padding: 16px; }
.map { position: relative; aspect-ratio: 1324 / 720; border-radius: 26px; overflow: hidden; background: #f2efe9; }
.map-svg { display: block; width: 100%; height: 100%; stroke: none; }
.zoom { position: absolute; left: 20px; top: 20px; display: flex; flex-direction: column; border: 4px solid rgba(0, 0, 0, 0.2); border-radius: 8px; background: #fff; background-clip: padding-box; }
.zoom button { width: 60px; height: 60px; text-align: center; font: bold 44px/56px "DejaVu Sans Mono", monospace; padding-bottom: 4px; color: #000; }
.zoom button:first-child { border-bottom: 2px solid #ccc; }
.empty { display: flex; justify-content: center; align-items: flex-start; min-height: 480px; padding-top: 152px; }
.empty-icon { width: 112px; height: 112px; border-radius: 50%; background: #f1f5f9; color: #94a3b8; display: grid; place-items: center; }
.empty-icon svg { width: 48px; height: 48px; }

/* Map layers */
.water-fill { fill: #aad3df; }
.town { fill: #d1d1d1; }
.land { fill: #f2efe9; }
.wood { fill: #add19e; }
.scrub { fill: #a8cdb5; }
.mint { fill: #c8facc; }
.lime { fill: #cdebb0; }
.airport { fill: #f2dad5; }
.hatch { stroke: #e8c4c0; stroke-width: 1; }
.lane { stroke: #bdbdbb; stroke-width: 3; }
.river { stroke: #a0d1e2; stroke-width: 7; }
.dash { stroke: #b9a0b9; stroke-width: 5; stroke-dasharray: 18 6 4 6; }
.blueline { stroke: #9a9fc2; stroke-width: 6; stroke-dasharray: 22 5; }
.rail { stroke: #9aa09a; stroke-width: 4; stroke-dasharray: 16 6; }
.greenline { stroke: #8cc68a; stroke-opacity: 0.65; stroke-width: 14; }
.darkline { stroke: #6f8068; stroke-opacity: 0.8; stroke-width: 9; }
.olive { stroke: #b5a83c; stroke-width: 7; }
.bound { stroke: #94719a; stroke-opacity: 0.6; stroke-width: 11; }
.road2 { stroke: #f6c16f; stroke-width: 7; }
.wide { stroke-width: 18; stroke-linecap: butt; }
.ochre { stroke: #cf9a5a; }
.trunk { stroke: #f98f73; stroke-width: 9; }
.redline { stroke: #b04a54; stroke-width: 9; }
.motor { stroke: #e46487; stroke-width: 11; }
.peaks { stroke: none; marker-start: url(#peak); marker-mid: url(#peak); marker-end: url(#peak); }
.place { font-family: "Noto Sans", sans-serif; font-size: 22px; text-anchor: middle; fill: #3f3f3f; stroke: rgba(255, 255, 255, 0.6); stroke-width: 4px; paint-order: stroke; }
.town-name { font-size: 28px; }
.city { font-size: 30px; }
.admin { font-size: 24px; fill: #9c749f; }
.slant { font-size: 26px; }
.slant, .small { font-style: italic; }
.small { font-size: 20px; }
.stops { fill: #f59e0b; stroke: #fff; stroke-width: 3; }
```
